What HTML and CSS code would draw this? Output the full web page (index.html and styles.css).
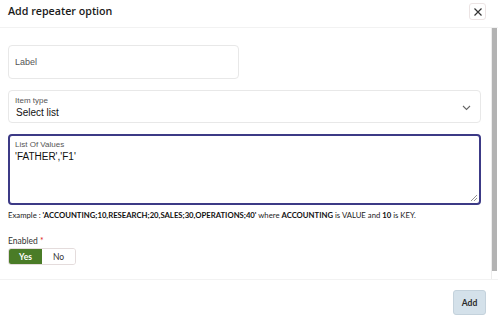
FILE: index.html
```html
<!DOCTYPE html>
<html>
<head>
<meta charset="utf-8">
<link rel="stylesheet" href="styles.css">
</head>
<body>
<div class="dialog">
  <div class="header">
    <div class="title">Add repeater option</div>
    <button class="close" aria-label="Close">
      <svg width="10" height="10" viewBox="0 0 10 10"><path d="M1.5 1.5L8.5 8.5M8.5 1.5L1.5 8.5" stroke="#333" stroke-width="1.2" fill="none"/></svg>
    </button>
  </div>
  <div class="middle">
    <div class="body">
      <div class="field label-field"><span class="placeholder">Label</span></div>
      <div class="field select-field">
        <div class="select-text">
          <span class="small">Item type</span>
          <span class="value">Select list</span>
        </div>
        <svg class="chev" width="9" height="6" viewBox="0 0 9 6"><path d="M1 1L4.5 4.5L8 1" stroke="#666" stroke-width="1.1" fill="none"/></svg>
      </div>
      <div class="field textarea-field">
        <span class="small">List Of Values</span>
        <span class="value">'FATHER','F1'</span>
        <svg class="grip" width="8" height="8" viewBox="0 0 8 8"><path d="M7 1L1 7M7 4L4 7" stroke="#777" stroke-width="0.8" fill="none"/></svg>
      </div>
      <div class="example">Example : <b>'ACCOUNTING;10,RESEARCH;20,SALES;30,OPERATIONS;40'</b> where <b>ACCOUNTING</b> is VALUE and <b>10</b> is KEY.</div>
      <div class="enabled">Enabled <span class="req">*</span></div>
      <div class="toggle">
        <span class="opt on">Yes</span>
        <span class="opt">No</span>
      </div>
    </div>
    <div class="scrollbar"></div>
  </div>
  <div class="footer">
    <button class="add">Add</button>
  </div>
</div>
</body>
</html>
```
FILE: styles.css
```css
* { box-sizing: border-box; }
html, body { margin: 0; padding: 0; background: #fff; }
body { width: 498px; height: 324px; overflow: hidden; font-family: "Liberation Sans", Arial, sans-serif; }
.dialog { width: 498px; height: 324px; display: flex; flex-direction: column; }
.header { height: 28px; display: flex; align-items: flex-start; justify-content: space-between; padding: 3px 12px 0 8px; border-bottom: 1px solid #f2f2f2; }
.title { font-family: "Open Sans", sans-serif; font-weight: 600; font-size: 10.7px; color: #1a1a1a; padding-top: 1px; }
.close { width: 17px; height: 17px; padding: 0; border: 1px solid #ece4e4; border-radius: 3px; background: #fff; display: flex; align-items: center; justify-content: center; }
.middle { flex: 1; display: flex; min-height: 0; }
.body { flex: 1; padding: 17px 10px 0 8px; display: flex; flex-direction: column; align-items: flex-start; border-right: 1px solid #ececec; }
.scrollbar { width: 6px; margin: 0 1px 8px 0; background: #b3b3b3; }
.field { border: 1px solid #e8e8e8; border-radius: 4px; background: #fff; }
.label-field { width: 231px; height: 34px; display: flex; align-items: center; padding-left: 6px; }
.placeholder { font-size: 9px; color: #555; }
.select-field { margin-top: 11px; width: 473px; height: 33px; display: flex; align-items: center; justify-content: space-between; padding: 1px 9px 0 6px; }
.select-text { display: flex; flex-direction: column; }
.small { font-size: 8px; color: #555; line-height: 11px; }
.value { font-size: 10px; color: #111; line-height: 13px; }
.select-text .value { padding-left: 1px; }
.chev { margin-top: 1px; }
.textarea-field { margin-top: 11px; width: 473px; height: 71px; border: 2px solid #3c3a86; border-radius: 4px; display: flex; flex-direction: column; padding: 3px 5px; position: relative; }
.grip { position: absolute; right: 1px; bottom: 1px; }
.example { margin-top: 5px; font-family: Lato, sans-serif; font-size: 7.73px; color: #222; white-space: nowrap; }
.example b { font-weight: 700; color: #111; }
.enabled { margin-top: 16px; font-family: Lato, sans-serif; font-size: 8.5px; color: #333; }
.req { color: #e01c1c; }
.toggle { margin-top: 2px; display: flex; border: 1px solid #e4dcdc; border-radius: 3px; overflow: hidden; height: 17px; }
.opt { width: 33px; display: flex; align-items: center; justify-content: center; font-family: Lato, sans-serif; font-size: 8.5px; color: #333; background: #fff; }
.opt.on { background: #4a7c27; color: #fff; font-weight: 700; }
.footer { height: 45px; border-top: 1px solid #f2f2f2; display: flex; justify-content: flex-end; align-items: flex-start; padding: 10px 12px 0 0; }
.add { width: 33px; height: 25px; padding: 0; border: 1px solid #c4d2dc; border-radius: 3px; background: #d4e1ea; font-family: Lato, sans-serif; font-weight: 700; font-size: 8.5px; color: #2a2a2a; }
```
